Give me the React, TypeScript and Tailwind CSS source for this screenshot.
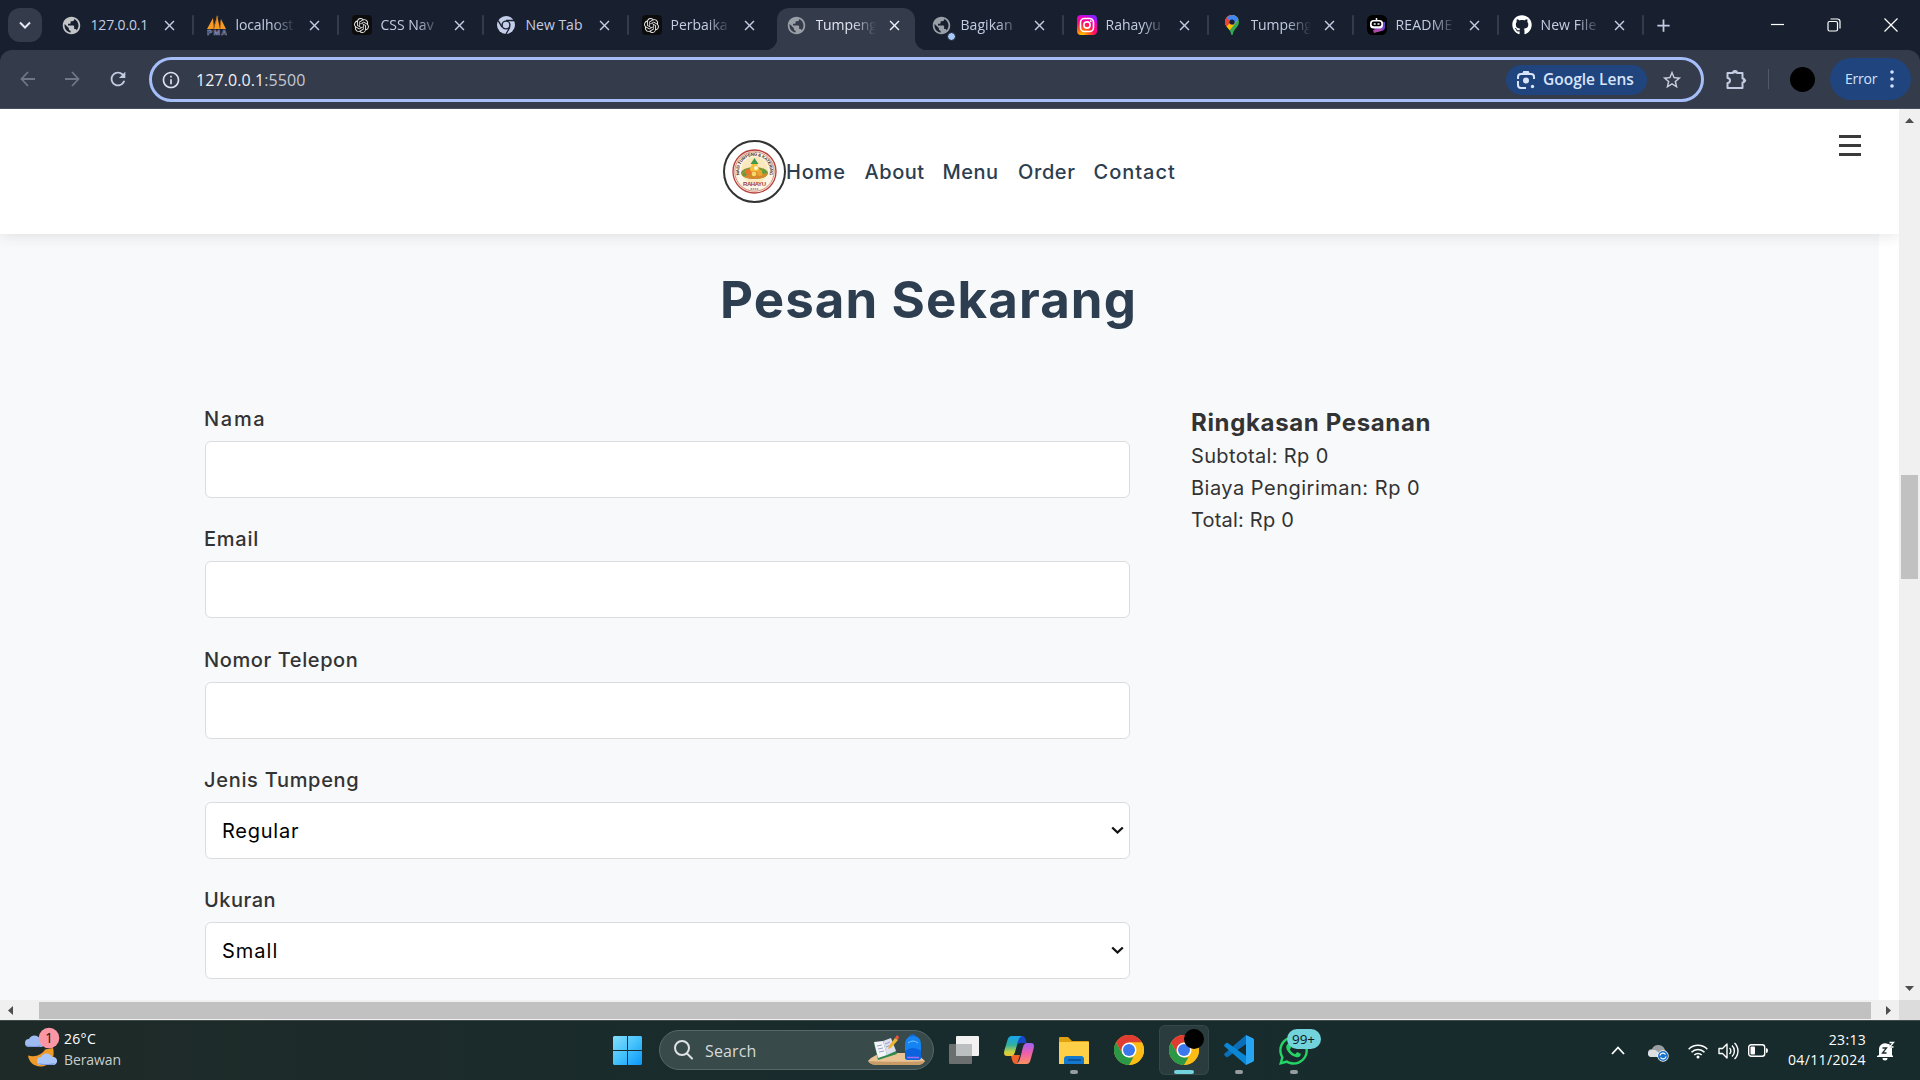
import type { ReactNode } from 'react';
import { MdPublic, MdStarBorder, MdInfoOutline, MdRefresh, MdClose, MdAdd } from 'react-icons/md';
import { SiOpenai } from 'react-icons/si';
import { FaGithub, FaWhatsapp } from 'react-icons/fa';

const PhpMyAdminIcon = () => (
  <svg width="20" height="22" viewBox="0 0 20 22">
    <path d="M0 15L6 4l1 11zM7 15L10 1l3 14zM13 15l1-10 5 10z" fill="#f59a23" />
    <path d="M6 15L11 2M14 6l-1 9" stroke="#b86a10" strokeWidth=".8" />
    <text x="0" y="21" fontSize="8" fontWeight="700" fill="#26305a" stroke="#8b96bd" strokeWidth=".5" textLength="20" fontFamily="Liberation Sans">PMA</text>
  </svg>
);

const OpenAiIcon = () => (
  <span className="flex size-5 items-center justify-center rounded bg-[#0d0d0d] text-[#e8e8e8]">
    <SiOpenai size={15} />
  </span>
);

const ChromeMonoIcon = () => (
  <svg width="18" height="18" viewBox="0 0 18 18">
    <circle cx="9" cy="9" r="9" fill="#c4cdea" />
    <path d="M9 4.5h8M5.1 11.2L1.2 4.6M12.9 11.2L9 18" stroke="#18202f" strokeWidth="1.3" />
    <circle cx="9" cy="9" r="4.6" fill="#18202f" />
    <circle cx="9" cy="9" r="3.2" fill="#c4cdea" />
  </svg>
);

const InstagramIcon = () => (
  <svg width="20" height="20" viewBox="0 0 20 20">
    <defs>
      <radialGradient id="ig" cx=".25" cy="1.05" r="1.1">
        <stop offset="0" stopColor="#ffdd00" />
        <stop offset=".3" stopColor="#ff6a10" />
        <stop offset=".6" stopColor="#ff0a6c" />
        <stop offset=".85" stopColor="#f000c0" />
        <stop offset="1" stopColor="#8a20ff" />
      </radialGradient>
    </defs>
    <rect width="20" height="20" rx="4" fill="url(#ig)" />
    <rect x="3.5" y="3.5" width="13" height="13" rx="4" fill="none" stroke="#fff" strokeWidth="1.6" />
    <circle cx="10" cy="10" r="3.1" fill="none" stroke="#fff" strokeWidth="1.6" />
    <circle cx="13.8" cy="6.2" r=".9" fill="#fff" />
  </svg>
);

const MapsIcon = () => (
  <svg width="20" height="20" viewBox="0 0 20 20">
    <defs>
      <clipPath id="pin"><path d="M10 0a7 7 0 0 1 7 7c0 4.5-4.5 6-6 11.5-.3 2-1.7 2-2 0C7.5 13 3 11.5 3 7a7 7 0 0 1 7-7z" /></clipPath>
    </defs>
    <g clipPath="url(#pin)">
      <path d="M0 0h20v20H0z" fill="#34a853" />
      <path d="M0 0h20L8 15H0z" fill="#fbbc04" />
      <path d="M2 0h9L3 11H0z" fill="#ea4335" />
      <path d="M4 3l5-3h8v4l-6 6z" fill="#4285f4" />
      <path d="M1 4l4-1 4 4-5 5z" fill="#ea4335" />
    </g>
    <circle cx="10" cy="7" r="2.6" fill="#18202f" />
  </svg>
);

const BotIcon = () => (
  <svg width="20" height="20" viewBox="0 0 20 20">
    <rect width="20" height="20" rx="5.5" fill="#000" />
    <path d="M6 7h12v5a4 4 0 0 1-4 4l-6 1z" fill="#6b3fd0" />
    <path d="M6 15l10-2-2 3-7 2z" fill="#b04aa8" />
    <rect x="3" y="5" width="13" height="8.5" rx="3.5" fill="#fff" />
    <rect x="4.7" y="6.6" width="9.6" height="4.6" rx="2" fill="#000" />
    <path d="M6.7 9h2M10.500 9h2" stroke="#fff" strokeWidth="1.6" />
    <path d="M9.5 3v2.5" stroke="#fff" strokeWidth="1.5" />
  </svg>
);

const GlobeIcon = ({ className }: { className: string }) => <MdPublic size={21} className={`-ml-px ${className}`} />;

type Tab = { title: string; icon: ReactNode; active?: boolean; line?: boolean; fade?: boolean; track: string };
const tabs: Tab[] = [
  { title: '127.0.0.1', icon: <GlobeIcon className="text-[#c3c4c6]" />, line: true, track: 'tracking-[-0.15px]' },
  { title: 'localhost', icon: <PhpMyAdminIcon />, line: true, fade: true, track: 'tracking-[-0.1px]' },
  { title: 'CSS Nav', icon: <OpenAiIcon />, line: true, fade: true, track: 'tracking-[0px]' },
  { title: 'New Tab', icon: <ChromeMonoIcon />, line: true, track: 'tracking-[0px]' },
  { title: 'Perbaika', icon: <OpenAiIcon />, fade: true, track: 'tracking-[0px]' },
  { title: 'Tumpeng', icon: <GlobeIcon className="text-[#9a9ea6]" />, active: true, fade: true, track: 'tracking-[-0.1px]' },
  {
    title: 'Bagikan',
    icon: (
      <span className="relative">
        <GlobeIcon className="text-[#9a9ea6]" />
        <i className="absolute -bottom-[5px] left-[15px] size-[9px] rounded-full border border-[#18202f] bg-[#a8c7fa]" />
      </span>
    ),
    line: true, fade: true, track: 'tracking-[0.05px]',
  },
  { title: 'Rahayyu', icon: <InstagramIcon />, line: true, fade: true, track: 'tracking-[0px]' },
  { title: 'Tumpeng', icon: <MapsIcon />, line: true, fade: true, track: 'tracking-[-0.1px]' },
  { title: 'README', icon: <BotIcon />, line: true, fade: true, track: 'tracking-[0.2px]' },
  { title: 'New File', icon: <FaGithub size={20} className="text-white" />, line: true, fade: true, track: 'tracking-[0.1px]' },
];

function BrowserTab({ tab }: { tab: Tab }) {
  return (
    <div className="relative flex h-[50px] w-[145px] shrink-0 items-center pb-2 pl-3.5 pt-2">
      {tab.active && (
        <>
          <div className="absolute bottom-0 left-1 right-[3px] top-2 rounded-t-xl bg-[#343b4b]" />
          <div className="absolute -left-2 bottom-0 size-3 bg-[radial-gradient(circle_at_0_0,transparent_12px,#343b4b_12.5px)]" />
          <div className="absolute -right-[9px] bottom-0 size-3 bg-[radial-gradient(circle_at_100%_0,transparent_12px,#343b4b_12.5px)]" />
        </>
      )}
      <div className="relative flex w-5 shrink-0 items-center">{tab.icon}</div>
      <div
        className={`relative ml-[9px] w-[60px] shrink-0 whitespace-nowrap text-sm leading-6 ${tab.track} ${tab.active ? 'text-[#e3e6f2]' : 'text-[#c4cce4]'} ${tab.fade ? '[mask-image:linear-gradient(to_right,black_60%,transparent_100%)]' : ''}`}
      >
        {tab.title}
      </div>
      <MdClose size={17} className={`relative ml-[10px] shrink-0 ${tab.active ? 'text-[#eef0fa]' : 'text-[#c4cce4]'}`} />
      {tab.line && <i className="absolute -right-px top-[15px] h-5 w-0.5 rounded bg-[#343b4b]" />}
    </div>
  );
}

function TabStrip() {
  return (
    <div className="flex h-[50px] bg-[#18202f]">
      <div className="flex w-[47.500px] shrink-0 pl-2 pt-2">
        <div className="flex size-[34px] items-center justify-center rounded-xl bg-[#343b4b]">
          <svg width="12" height="8" viewBox="0 0 12 8" fill="none" stroke="#e6e9f4" strokeWidth="2"><path d="M1 1.5l5 5 5-5" /></svg>
        </div>
      </div>
      {tabs.map((t, i) => <BrowserTab key={i} tab={t} />)}
      <div className="flex w-[60px] items-center pl-2.5 text-[#c4cce4]"><MdAdd size={21} /></div>
      <div className="ml-auto flex items-center gap-[43px] pr-[22px]">
        <svg width="13" height="14" viewBox="0 0 13 14"><path d="M0 6.5h13" stroke="#fff" strokeWidth="1.2" /></svg>
        <svg width="14" height="14" viewBox="0 0 14 14" fill="none" stroke="#fff" strokeWidth="1.2">
          <rect x="1" y="3.5" width="9.5" height="9.5" rx="1.5" />
          <path d="M3.5 1h7A2.5 2.5 0 0 1 13 3.5v7" />
        </svg>
        <svg width="14" height="14" viewBox="0 0 14 14" stroke="#fff" strokeWidth="1.2"><path d="M.5.5l13 13M13.5.5l-13 13" /></svg>
      </div>
    </div>
  );
}

function Toolbar() {
  return (
    <div className="bg-[#18202f]">
      <div className="flex h-[59px] items-center rounded-t-xl border-b border-[#474f60] bg-[#343b4b]">
        <div className="flex w-[149px] items-center pl-[20px] text-[#c4cce4]">
          <svg width="15" height="16" viewBox="0 0 15 16" fill="none" stroke="#6f7687" strokeWidth="1.8"><path d="M8 1L1.5 8 8 15M1.5 8H15" /></svg>
          <svg width="15" height="16" viewBox="0 0 15 16" fill="none" stroke="#6f7687" strokeWidth="1.8" className="ml-[30px]"><path d="M7 1l6.500 7L7 15M13.5 8H0" /></svg>
          <MdRefresh size={22} className="ml-[27px]" />
        </div>
        <div className="mt-px flex h-[45px] w-[1555px] items-center rounded-full border-[3px] border-[#a5bdf8] pl-[9px] pr-[18px]">
          <MdInfoOutline size={20} className="text-[#dfe2ee]" />
          <span className="ml-[15px] text-base tracking-[0.08px] text-[#c4c8d2]"><span className="text-[#eef0f8]">127.0.0.1</span>:5500</span>
          <div className="ml-auto flex h-[30px] w-[141px] items-center rounded-full bg-[#20447d] pl-[11px] text-[#d8e4fc]">
            <svg width="18" height="18" viewBox="0 0 18 18" fill="none" stroke="currentColor" strokeWidth="2">
              <path d="M1 8V6a3 3 0 0 1 3-3h10a3 3 0 0 1 3 3v2M1 10v4a3 3 0 0 0 3 3h5M6 3l1-2h4l1 2" />
              <circle cx="9" cy="9.5" r="3" fill="currentColor" stroke="none" />
              <circle cx="15.5" cy="15.5" r="1.7" fill="currentColor" stroke="none" />
            </svg>
            <span className="ml-2 mt-px whitespace-nowrap text-[15.5px] font-semibold">Google Lens</span>
          </div>
          <MdStarBorder size={22} className="ml-[14px] text-[#c8ccdc]" />
        </div>
        <svg width="21" height="21" viewBox="0 0 21 21" fill="none" stroke="#c4cce4" strokeWidth="2" strokeLinejoin="round" className="ml-[22px]">
          <path d="M1.5 4H7a2 2 0 0 1 4 0h5.5v5.5a2 2 0 0 1 0 4V19h-15v-5a2.5 2.5 0 0 0 0-5z" />
          <circle cx="9" cy="2.8" r="1.6" fill="#c4cce4" stroke="none" />
          <circle cx="18.500" cy="11.500" r="1.6" fill="#c4cce4" stroke="none" />
        </svg>
        <i className="ml-[21px] h-5 w-px bg-[#50586a]" />
        <i className="ml-[21px] size-[25px] rounded-full bg-black" />
        <div className="ml-[15px] flex h-[42px] w-[81px] items-center rounded-full bg-[#20447d] pl-[15px] text-sm tracking-[-0.2px] text-[#d3e2ff]">
          Error
          <svg width="4" height="18" viewBox="0 0 4 18" fill="currentColor" className="ml-[13px]">
            <circle cx="2" cy="2" r="1.8" /><circle cx="2" cy="9" r="1.8" /><circle cx="2" cy="16" r="1.8" />
          </svg>
        </div>
      </div>
    </div>
  );
}

const BrandLogo = () => (
  <div className="flex size-[63px] shrink-0 items-center justify-center rounded-full border-2 border-[#333]">
    <svg width="47" height="47" viewBox="0 0 47 47">
      <circle cx="23.5" cy="23.5" r="21.5" fill="#fbf1dd" stroke="#b5403c" strokeWidth="1.3" />
      <circle cx="23.5" cy="23.5" r="19.7" fill="#fdf6e6" stroke="#c4605a" strokeWidth=".7" />
      <circle cx="23.5" cy="22" r="13.5" fill="#fbe9bd" />
      <defs><path id="arc" d="M8.500 27A15.500 15.500 0 1 1 38.500 27" /></defs>
      <text fontSize="4.300" fontWeight="700" fill="#3b3024" fontFamily="Liberation Sans"><textPath href="#arc" textLength="56">NASI TUMPENG &amp; KATERING</textPath></text>
      <ellipse cx="23.5" cy="25" rx="13.5" ry="6" fill="#7a9a3a" />
      <ellipse cx="23.5" cy="26.500" rx="12.5" ry="4.5" fill="#d5892c" />
      <path d="M23.5 11l6 12.500h-12z" fill="#f3c13c" />
      <path d="M23.5 10l4 6h-8z" fill="#3f9a4a" />
      <circle cx="17" cy="24" r="3" fill="#e8752c" />
      <circle cx="29" cy="25" r="3" fill="#e9a52f" />
      <circle cx="23" cy="26" r="2.3" fill="#f5dc6a" />
      <circle cx="33" cy="24" r="2" fill="#5aa044" />
      <circle cx="13.5" cy="26.5" r="2" fill="#5aa044" />
      <circle cx="25" cy="20" r="2" fill="#fff3d0" />
      <text x="23.5" y="37.500" textAnchor="middle" fontSize="6" fontWeight="700" fill="#a83a34" textLength="23" fontFamily="Liberation Sans">RAHAYU</text>
      <path d="M19.500 41h8" stroke="#6b5a4a" strokeWidth="1.2" strokeDasharray="1.5 .6" />
    </svg>
  </div>
);

function SiteHeader() {
  const item = 'shrink-0 whitespace-nowrap';
  return (
    <header className="relative z-10 flex h-[125px] items-center bg-white pl-[723px] shadow-[0_2px_14px_rgba(0,0,0,0.1)]">
      <BrandLogo />
      <nav className="flex pt-px text-xl font-medium text-[#2c3e50]">
        <a className={`${item} w-[78.500px] tracking-[0.8px]`}>Home</a>
        <a className={`${item} w-[78px] tracking-[0.55px]`}>About</a>
        <a className={`${item} w-[75.500px] tracking-[0.5px]`}>Menu</a>
        <a className={`${item} w-[75.500px] tracking-[0.6px]`}>Order</a>
        <a className={`${item} tracking-[0.98px]`}>Contact</a>
      </nav>
      <div className="ml-auto mr-[38px] flex w-[22px] flex-col gap-[6px] self-start pt-[26px]">
        <i className="h-[3px] bg-[#3a3a3a]" />
        <i className="h-[3px] bg-[#3a3a3a]" />
        <i className="h-[3px] bg-[#3a3a3a]" />
      </div>
    </header>
  );
}

const fields = [
  { label: 'Nama', track: 'tracking-[1.700px]', value: '', vt: '' },
  { label: 'Email', track: 'tracking-[0.750px]', value: '', vt: '' },
  { label: 'Nomor Telepon', track: 'tracking-[0.600px]', value: '', vt: '' },
  { label: 'Jenis Tumpeng', track: 'tracking-[0.700px]', value: 'Regular', vt: 'tracking-[0.750px]' },
  { label: 'Ukuran', track: 'tracking-[0.500px]', value: 'Small', vt: 'tracking-[1px]' },
];

function OrderForm() {
  return (
    <section className="h-full w-[1879px] bg-[#f8f9fb] text-[#333]">
      <h2 className="pl-[720px] pt-[26px] text-[51px] font-bold leading-[80px] tracking-[1.100px] text-[#2c3e50]">Pesan Sekarang</h2>
      <div className="flex gap-[62px] pl-[205px] pt-[62px]">
        <form className="-ml-px flex w-[926px] flex-col">
          {fields.map((f) => (
            <div key={f.label} className="h-[120.25px] shrink-0">
              <label className={`block h-[39px] text-xl font-medium leading-[35px] ${f.track}`}>{f.label}</label>
              <div className="ml-px flex h-[57px] items-center justify-between rounded-[6px] border border-[#dadcde] bg-white pl-[16px] pr-[5px] text-xl text-black">
                <span className={`pt-px ${f.vt}`}>{f.value}</span>
                {f.value && (
                  <svg width="13" height="9" viewBox="0 0 13 9" fill="none" stroke="#111" strokeWidth="2.3"><path d="M1.2 1.5l5.300 5 5.300-5" /></svg>
                )}
              </div>
            </div>
          ))}
        </form>
        <aside className="-ml-px text-xl leading-8">
          <h3 className="pt-[3px] text-2xl font-bold leading-[35px] tracking-[0.650px]">Ringkasan Pesanan</h3>
          <p className="tracking-[0.350px]">Subtotal: Rp 0</p>
          <p className="tracking-[0.500px]">Biaya Pengiriman: Rp 0</p>
          <p className="tracking-[0.200px]">Total: Rp 0</p>
        </aside>
      </div>
    </section>
  );
}

const Arrow = ({ d, w, h }: { d: string; w: number; h: number }) => (
  <svg width={w} height={h} viewBox={`0 0 ${w} ${h}`}><path d={d} fill="#4d4d4d" /></svg>
);

function Viewport() {
  return (
    <>
      <div className="flex h-[891px]">
        <main className="h-full w-[1899px] overflow-hidden bg-white">
          <SiteHeader />
          <OrderForm />
        </main>
        <div className="flex w-[21px] flex-col items-center bg-[#f0f0f0] pt-[9px]">
          <Arrow d="M0 5l4.500-5L9 5z" w={9} h={5} />
          <div className="mt-[352px] h-[104px] w-[17px] bg-[#c1c1c1]" />
          <div className="mb-[9px] mt-auto flex"><Arrow d="M0 0l4.500 5L9 0z" w={9} h={5} /></div>
        </div>
      </div>
      <div className="flex h-5 items-center bg-[#f0f0f0]">
        <div className="w-[39px] pl-[8px]"><Arrow d="M5 0v9L0 4.500z" w={5} h={9} /></div>
        <div className="h-[17px] w-[1832px] bg-[#c1c1c1]" />
        <div className="w-[28px] pl-[15px]"><Arrow d="M0 0v9l5-4.500z" w={5} h={9} /></div>
        <div className="h-full w-[21px] bg-[#dcdcdc]" />
      </div>
    </>
  );
}

const WeatherIcon = () => (
  <svg width="36" height="46" viewBox="0 0 36 46">
    <path d="M29 21c3 11-5 19-13 18.500-6-.5-11-4-12-11 8 2 14-1 17-6z" fill="#f09a2a" />
    <path d="M5 20a4 4 0 0 1 0-8 6 6 0 0 1 11 0 4 4 0 0 1 1 8z" fill="#9fbcf2" />
    <path d="M17 38a4 4 0 0 1 0-8 6 6 0 0 1 11 0 4 4 0 0 1 2 8z" fill="#a9c6f8" />
    <path d="M2 18q8 2 15 0l-1 2H5zM14 36q8 2 17 0l-2 2H17z" fill="#7d9de0" />
    <circle cx="25" cy="11" r="10.300" fill="#fb97a5" />
    <text x="25" y="16" textAnchor="middle" fontSize="14" fill="#151515" fontFamily="Open Sans">1</text>
  </svg>
);

const WindowsIcon = () => (
  <svg width="29" height="29" viewBox="0 0 29 29">
    <defs><linearGradient id="win" gradientUnits="userSpaceOnUse" x1="0" y1="0" x2="29" y2="29"><stop stopColor="#86defc" /><stop offset=".5" stopColor="#44c2fb" /><stop offset="1" stopColor="#0b96fa" /></linearGradient></defs>
    <path d="M1 0h13v14H0V1zM15 0h13l1 1v13H15zM0 15h14v14H1l-1-1zM15 15h14v13l-1 1H15z" fill="url(#win)" />
  </svg>
);

const StudyArt = () => (
  <svg width="58" height="34" viewBox="0 0 58 34">
    <path d="M0 27c3-4 7-5 12-8h36c3 3 6 5 9 8-2 3-5 4-9 4H10c-4 0-8-1-10-4z" fill="#e9c394" />
    <path d="M0 27c2 3 6 4 10 4h38c4 0 7-1 9-4-4 1-50 1-57 0z" fill="#c99b66" />
    <path d="M6 10l18-4 5 14-19 6z" fill="#2f8a4e" />
    <path d="M6 8l9-1 4 14-9 3z" fill="#f4f4fa" /><path d="M15 7l8-3 5 13-9 4z" fill="#dddff0" />
    <path d="M9 12l5-1M10 15l5-1M11 18l5-1M17 10l5-2M18 13l5-2" stroke="#9aa0c0" strokeWidth="1" />
    <path d="M21 12l6-8 3 2-7 8-3 1z" fill="#f2b234" /><path d="M27 4l2-3 2 2-1 3z" fill="#ee5340" />
    <path d="M41 2q4-4 7 0v3h-7z" fill="#1663c7" />
    <path d="M37 11c0-6 3-9 8-9s8 3 8 9v12c0 2-1 3-3 3H40c-2 0-3-1-3-3z" fill="#1583f2" />
    <path d="M37 17q8-6 16 0v6c0 2-1 3-3 3H40c-2 0-3-1-3-3z" fill="#0c62dc" />
    <path d="M39 23.500h12" stroke="#a070f0" strokeWidth="1.5" /><path d="M40 9q5-4 10 0" stroke="#7cc6ff" fill="none" />
  </svg>
);

const TaskViewIcon = () => (
  <svg width="30" height="28" viewBox="0 0 30 28">
    <rect x="0" y="8" width="23" height="20" rx="1" fill="#6b6f6f" />
    <rect x="7" y="0" width="23" height="20" rx="1" fill="#f2f2f2" />
    <path d="M7 8h16v12H7z" fill="#bcbfbf" />
  </svg>
);

const CopilotIcon = () => (
  <svg width="30" height="28" viewBox="0 0 30 28">
    <defs>
      <linearGradient id="cp1" x1="0" y1="0" x2="0" y2="1"><stop stopColor="#18a5f0" /><stop offset=".45" stopColor="#2fb0a0" /><stop offset=".8" stopColor="#c8d440" /><stop offset="1" stopColor="#f0c030" /></linearGradient>
      <linearGradient id="cp2" x1="0" y1="0" x2="0" y2="1"><stop stopColor="#a060f8" /><stop offset=".5" stopColor="#f060a8" /><stop offset="1" stopColor="#fb9060" /></linearGradient>
    </defs>
    <path d="M15 0h3c3 0 3.500 2 4.500 7h-6c-2 0-3 1-4 4z" fill="#1648c8" />
    <path d="M7 19h9l-3 9h-1c-3 0-4-3-5-9z" fill="#f0622c" />
    <path d="M7.500 0H18c-3 1-4 5-5 9l-2 7c-1 3-2 4-4 4H3c-3 0-3.500-2-2.500-6l3-10c1-3 2-4 4-4z" fill="url(#cp1)" />
    <path d="M22.500 28H12c3-1 4-5 5-9l2-8c1-3 2-4 4-4h4c3 0 3.500 2 2.500 6l-3 11c-1 3-2 4-4 4z" fill="url(#cp2)" />
  </svg>
);

const ExplorerIcon = () => (
  <svg width="30" height="27" viewBox="0 0 30 27">
    <path d="M0 1q0-1 1-1h8l4 4h16q1 0 1 1v5H0z" fill="#e0a010" />
    <rect x="0" y="5" width="30" height="22" rx=".5" fill="#ffcf48" />
    <path d="M5 27v-5c0-2 1-3 3-3h14c2 0 3 1 3 3v5z" fill="#1478cc" />
    <path d="M9 23h13" stroke="#0a4d94" strokeWidth="1.5" />
  </svg>
);

const ChromeIcon = () => (
  <svg width="30" height="30" viewBox="0 0 30 30">
    <circle cx="15" cy="15" r="15" fill="#fbbc16" />
    <path d="M2 7.5A15 15 0 0 1 28 7.5H15l-6.500 11.300z" fill="#e03c31" />
    <path d="M2 7.5L8.500 18.800 15 22.500h6.500L15 30A15 15 0 0 1 2 7.5z" fill="#2a9847" />
    <path d="M15 7.5h13A15 15 0 0 1 15 30l6.500-11.300z" fill="#fbbc16" />
    <circle cx="15" cy="15" r="7.500" fill="#fff" />
    <circle cx="15" cy="15" r="6" fill="#3b78ee" />
  </svg>
);

const VsCodeIcon = () => (
  <svg width="30" height="30" viewBox="0 0 30 30">
    <path d="M22 0L.6 18.500a1.300 1.300 0 0 0 0 1.900l1.700 1.500c.5.4 1 .4 1.500 0L22 9z" fill="#0a6fb8" />
    <path d="M22 30L.6 11.500a1.300 1.300 0 0 1 0-1.900l1.700-1.500c.5-.4 1-.4 1.500 0L22 21z" fill="#0a86d4" />
    <path d="M22 0l7 3.300c.6.3 1 .9 1 1.500v20.400c0 .6-.4 1.200-1 1.500L22 30z" fill="#28a5f2" />
  </svg>
);

function Dock({ children, indicator }: { children: ReactNode; indicator?: 'on' | 'idle' }) {
  return (
    <div className="flex w-[55px] justify-center pt-[4px]">
      <div className={`relative flex h-[50px] w-[50px] items-center justify-center rounded-md ${indicator === 'on' ? 'border border-white/6 bg-white/8' : ''}`}>
        {children}
        {indicator === 'on' && <i className="absolute bottom-0 h-1 w-5 rounded-full bg-[#72d3dc]" />}
        {indicator === 'idle' && <i className="absolute bottom-px h-1 w-2 rounded-full bg-[#959c9d]" />}
      </div>
    </div>
  );
}

function Taskbar() {
  return (
    <footer className="flex h-[60px] border-t border-[#414b4c] bg-linear-to-r from-[#1e2a28] via-[#182c2d] to-[#172b2d] text-white">
      <div className="flex w-[613px] pl-[24px] pt-[6px]">
        <WeatherIcon />
        <div className="ml-[4px] pt-[2px] text-sm leading-[20px]">
          <div className="h-5 tracking-[0.3px]">26°C</div>
          <div className="pt-px tracking-[-0.1px] text-[#c8cdce]">Berawan</div>
        </div>
      </div>
      <div className="flex items-center"><WindowsIcon /></div>
      <div className="ml-[17px] mt-[9px] flex h-10 w-[275px] items-center rounded-full border border-[#586767] bg-[#394a4a] pl-[14px]">
        <svg width="19" height="20" viewBox="0 0 19 20" fill="none" stroke="#dfe3e3" strokeWidth="2" strokeLinecap="round"><circle cx="8" cy="8" r="7" /><path d="M13 13.5l5 5" /></svg>
        <span className="ml-3 pt-0.5 text-base tracking-[0.15px] text-[#d5dbdb]">Search</span>
        <span className="ml-auto mr-[7px] mt-0.5"><StudyArt /></span>
      </div>
      <div className="ml-[2px] flex">
        <Dock><TaskViewIcon /></Dock>
        <Dock><CopilotIcon /></Dock>
        <Dock indicator="idle"><ExplorerIcon /></Dock>
        <Dock><ChromeIcon /></Dock>
        <Dock indicator="on">
          <ChromeIcon />
          <i className="absolute right-[4px] top-[3px] size-5 rounded-full bg-black" />
        </Dock>
        <Dock indicator="idle"><VsCodeIcon /></Dock>
        <Dock indicator="idle">
          <FaWhatsapp size={33} className="text-[#25d366]" />
          <span className="absolute left-[18px] top-[4px] flex h-5 w-[34px] items-center justify-center rounded-full bg-[#72d3dc] text-[13.5px] text-[#101818]">99+</span>
        </Dock>
      </div>
      <div className="ml-auto flex items-center pr-[25px]">
        <svg width="14" height="9" viewBox="0 0 14 9" fill="none" stroke="#fff" strokeWidth="1.8"><path d="M1 8l6-6.500L13 8" /></svg>
        <svg width="21" height="18" viewBox="0 0 21 18" className="ml-[23px] mt-1">
          <path d="M4 13a4 4 0 0 1 0-8 7 7 0 0 1 13 1 4 4 0 0 1 0 7z" fill="#9a9fa1" />
          <path d="M3 13a3.500 3.500 0 0 1 1-7q3-1 6 2l5 5z" fill="#dcdfe1" />
          <circle cx="15" cy="12" r="5.700" fill="#fff" /><circle cx="15" cy="12" r="5" fill="#1a74cf" />
          <path d="M12 11.500a3 3 0 0 1 5.500-1M18 12.500a3 3 0 0 1-5.500 1" stroke="#fff" strokeWidth="1.3" fill="none" />
        </svg>
        <svg width="20" height="16" viewBox="0 0 20 16" fill="none" stroke="#fff" strokeWidth="1.5" className="ml-[19px]">
          <path d="M.7 6.200a13 13 0 0 1 18.600 0M3.500 9.300a9 9 0 0 1 13 0M6.300 12a5.200 5.200 0 0 1 7.400 0" /><circle cx="10" cy="14" r="1.5" fill="#fff" stroke="none" />
        </svg>
        <svg width="21" height="18" viewBox="0 0 21 18" fill="none" stroke="#fff" strokeWidth="1.4" className="ml-[10px]">
          <path d="M1 6.500h3.500L9 2v14l-4.500-4.500H1z" strokeLinejoin="round" /><path d="M11.500 6a4 4 0 0 1 0 6M14 3.500a7.500 7.500 0 0 1 0 11M16.500 1a11 11 0 0 1 0 16" />
        </svg>
        <svg width="20" height="13" viewBox="0 0 20 13" className="ml-[9px]">
          <rect x=".7" y=".7" width="16" height="11.600" rx="2.500" fill="none" stroke="#fff" strokeWidth="1.4" /><rect x="2.500" y="2.500" width="4.500" height="8" rx="1" fill="#fff" /><path d="M18 4q2 0 2 2.500T18 9z" fill="#fff" />
        </svg>
        <div className="ml-[19px] w-[79px] whitespace-nowrap text-right text-sm leading-[20px]">
          <div className="mt-[-2px] tracking-[0.3px]">23:13</div>
          <div className="tracking-[0.38px]">04/11/2024</div>
        </div>
        <svg width="18" height="20" viewBox="0 0 18 20" className="ml-[11px]">
          <path d="M2 14V8a6 6 0 0 1 9-5h4v11l1 1v1H0v-1zM5.500 17h5a2.500 2.500 0 0 1-5 0z" fill="#fff" />
          <path d="M5.500 7h4l-4 5h4" fill="none" stroke="#182c2e" strokeWidth="1.3" />
          <path d="M11.500 0h6v7h-4z" fill="#182c2e" /><path d="M12.500 1.500h4l-4 4.500h4" fill="none" stroke="#fff" strokeWidth="1.3" />
        </svg>
      </div>
    </footer>
  );
}

export default function App() {
  return (
    <div className="flex h-[1080px] w-[1920px] flex-col overflow-hidden font-['Open_Sans','Noto_Sans',sans-serif]">
      <TabStrip />
      <Toolbar />
      <div className="font-['Inter',sans-serif]"><Viewport /></div>
      <Taskbar />
    </div>
  );
}
